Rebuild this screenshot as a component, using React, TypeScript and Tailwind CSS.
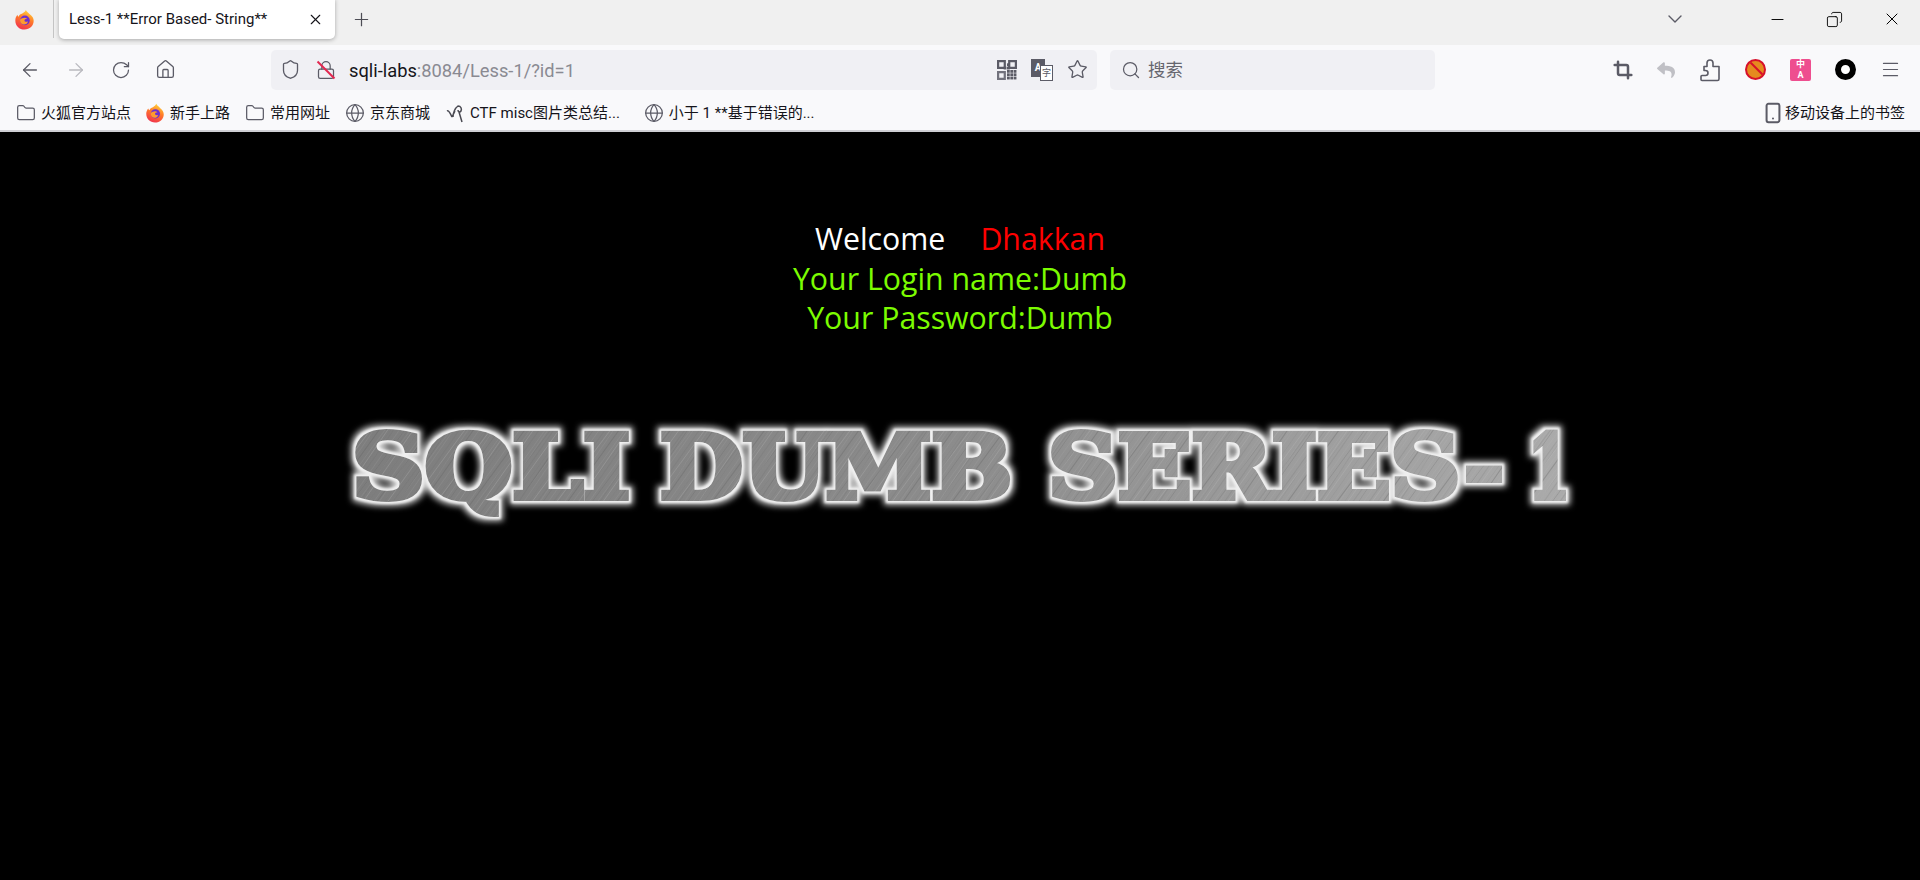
import { ArrowLeft, ArrowRight, RotateCw, House, Shield, Lock, Star, Search, Menu, Crop, Folder, Globe, Smartphone, ChevronDown, Minus, X, Copy, Plus } from "lucide-react";
import { FaReply } from "react-icons/fa";

const ui = "font-['Roboto','Noto_Sans_CJK_SC',sans-serif]";

function Fox({ size = 20 }: { size?: number }) {
  return (
    <svg width={size} height={size} viewBox="0 0 24 24" className="shrink-0">
      <defs>
        <linearGradient id="foxg" x1="0.7" y1="0" x2="0.3" y2="1">
          <stop offset="0" stopColor="#ffd83a" />
          <stop offset="0.45" stopColor="#ff7a2a" />
          <stop offset="1" stopColor="#f0304f" />
        </linearGradient>
      </defs>
      <path d="M13.5 1c1 2.5 3 3 4.500 5 3 2 4.500 5 4.500 7.500C22.500 19 18 23.500 12 23.500S1.500 19 1.500 13c0-2.500 1-5 2.500-6.500 0 1 .5 1.800 1.200 2.300C6 6.500 7.500 5.500 9.500 5c1.500-1 3.500-2 4-4z" fill="url(#foxg)" />
      <circle cx="12.500" cy="13" r="5.500" fill="#6a2fd0" />
      <path d="M7 12c2-2 6-3 8-1-2 0-3 1-3 2 0 2 3 2 4 1-.5 3-3.500 4.500-6 3.500C7.500 16.500 6.500 14 7 12z" fill="#ff9a2e" />
    </svg>
  );
}

function Bookmark({ icon, label }: { icon: React.ReactNode; label: string }) {
  return (
    <div className="flex items-center gap-[5px] text-[15px] text-[#15141a] whitespace-nowrap">
      {icon}
      <span>{label}</span>
    </div>
  );
}

const FolderIcon = <Folder size={20} strokeWidth={1.5} className="text-[#5b5b66]" />;
const GlobeIcon = <Globe size={20} strokeWidth={1.5} className="text-[#5b5b66]" />;

function QrIcon() {
  const cells = [
    [9, 9], [12, 12], [15, 15], [9, 12], [9, 15], [12, 15], [6, 6], [15, 12], [15, 9], [12, 9], [9, 3], [9, 6],
  ];
  return (
    <svg width="20" height="20" viewBox="0 0 18 18" fill="#5b5b66">
      <path d="M0 0h8v8H0zM2 2v4h4V2zM10 0h8v8h-8zM12 2v4h4V2z" fillRule="evenodd" />
      <path d="M0 10h8v8H0zM2 12v4h4v-4z" fillRule="evenodd" opacity="0.85" />
      {cells.map(([x, y]) => (
        <rect key={`${x}-${y}`} x={x} y={y} width="2.500" height="2.500" />
      ))}
    </svg>
  );
}

function PuzzleIcon() {
  return (
    <svg width="22" height="24" viewBox="0 0 22 24" fill="none" stroke="#5b5b66" strokeWidth="1.600" strokeLinejoin="round">
      <path d="M3 22.500h15.500a1.500 1.500 0 0 0 1.500-1.500V8.500h-6V5a3 3 0 1 0-6 0v3.500H5v4h1.500a2.500 2.500 0 0 1 0 5H3a1 1 0 0 0-1 1v3a1 1 0 0 0 1 1z" />
    </svg>
  );
}

function Title() {
  const lines = Array.from({ length: 340 }, (_, i) => i);
  return (
    <svg width="1240" height="124" viewBox="0 0 1240 124" className="block ml-[340px]">
      <defs>
        <linearGradient id="steel" x1="0" y1="0" x2="1" y2="0">
          <stop offset="0" stopColor="#7d7d7d" />
          <stop offset="0.5" stopColor="#8c8c8c" />
          <stop offset="1" stopColor="#ababab" />
        </linearGradient>
        <pattern id="brush" patternUnits="userSpaceOnUse" width="1240" height="124">
          <rect width="1240" height="124" fill="url(#steel)" />
          {lines.map((i) => (
            <line key={i} x1={i * 4 - 85 + (i % 3)} y1={124} x2={i * 4 + (i % 5) * 2} y2={0} stroke={i % 2 ? "#c4c4c4" : "#606060"} strokeOpacity={i % 3 === 0 ? 0.32 : 0.15} strokeWidth={i % 4 === 0 ? 1.2 : 0.7} />
          ))}
        </pattern>
        <filter id="glow" x="-3%" y="-25%" width="106%" height="150%">
          <feMorphology in="SourceAlpha" operator="dilate" radius="3.500" result="d3" />
          <feGaussianBlur in="d3" stdDeviation="3.200" result="b" />
          <feFlood floodColor="#ffffff" floodOpacity="0.85" />
          <feComposite in2="b" operator="in" result="halo" />
          <feMorphology in="SourceAlpha" operator="dilate" radius="1.500" result="d2" />
          <feGaussianBlur in="d2" stdDeviation="0.900" result="d2b" />
          <feFlood floodColor="#f0f0f0" />
          <feComposite in2="d2b" operator="in" result="edge" />
          <feMerge>
            <feMergeNode in="halo" />
            <feMergeNode in="edge" />
            <feMergeNode in="SourceGraphic" />
          </feMerge>
        </filter>
      </defs>
      <g filter="url(#glow)" fill="url(#brush)" fontFamily="'DejaVu Serif', serif" fontWeight="700" fontSize="88" stroke="url(#brush)" strokeWidth="6">
        <text x="12" y="86" textLength="278" lengthAdjust="spacingAndGlyphs">SQLI</text>
        <text x="320" y="86" textLength="352" lengthAdjust="spacingAndGlyphs">DUMB</text>
        <text x="708" y="86" textLength="456" lengthAdjust="spacingAndGlyphs">SERIES-</text>
        <text x="1188" y="86" textLength="42" lengthAdjust="spacingAndGlyphs">1</text>
      </g>
    </svg>
  );
}

export default function App() {
  return (
    <div className={`w-[1920px] h-[880px] flex flex-col overflow-hidden bg-black ${ui}`}>
      {/* tab strip */}
      <div className="h-[45px] bg-[#f0f0f0] flex items-start shrink-0">
        <div className="w-[54px] h-[38px] flex items-center pl-[14px] border-r border-[#c4c4c4]">
          <Fox size={21} />
        </div>
        <div className="ml-[5px] w-[276px] h-[40px] -mt-px bg-white rounded-b-[5px] shadow-[0_1px_4px_rgba(0,0,0,0.3)] flex items-center pl-[10px] pr-[11px] justify-between text-[15px] text-[#15141a]">
          <span className="whitespace-nowrap">Less-1 **Error Based- String**</span>
          <X size={17} strokeWidth={1.6} className="text-[#15141a]" />
        </div>
        <div className="ml-[16px] h-[38px] flex items-center">
          <Plus size={21} strokeWidth={1.4} className="text-[#4d4d55]" />
        </div>
        <div className="ml-auto h-[38px] flex items-center">
          <ChevronDown size={24} strokeWidth={1.4} className="text-[#5b5b66]" />
          <div className="w-[152px] ml-[81px] flex items-center justify-between pr-[18px]">
            <Minus size={19} strokeWidth={1.2} className="text-black" />
            <Copy size={17} strokeWidth={1.3} className="text-black -scale-x-100" />
            <X size={20} strokeWidth={1.2} className="text-black" />
          </div>
        </div>
      </div>
      {/* nav bar */}
      <div className="h-[49px] bg-[#f9f9fb] flex items-center shrink-0 text-[#5b5b66]">
        <div className="flex items-center gap-[24px] pl-[19px] w-[271px]">
          <ArrowLeft size={22} strokeWidth={1.4} />
          <ArrowRight size={22} strokeWidth={1.4} className="text-[#b9b9bf]" />
          <RotateCw size={20} strokeWidth={1.5} />
          <House size={21} strokeWidth={1.5} />
        </div>
        <div className="w-[826px] h-[40px] rounded-[5px] bg-[#f0f0f4] flex items-center pl-[9px] pr-[9px]">
          <Shield size={21} strokeWidth={1.5} />
          <div className="relative ml-[15px]">
            <Lock size={20} strokeWidth={1.5} />
            <div className="absolute left-[-2px] top-[9px] w-[24px] h-[2px] bg-[#e22850] rotate-45" />
          </div>
          <div className="ml-[13px] pt-[2px] text-[18.300px]">
            <span className="text-[#15141a]">sqli-labs</span>
            <span className="text-[#8a8a92]">:8084/Less-1/?id=1</span>
          </div>
          <div className="ml-auto flex items-center gap-[14px]">
            <QrIcon />
            <div className="w-[22px] h-[22px] relative">
              <div className="absolute left-0 top-0 w-[14px] h-[18px] bg-[#5b5b66] text-white text-[10px] font-bold leading-[18px] text-center">A</div>
              <div className="absolute right-0 bottom-0 w-[13px] h-[16px] border border-[#5b5b66] bg-white text-[9px] leading-[14px] text-center">字</div>
            </div>
            <Star size={21} strokeWidth={1.5} />
          </div>
        </div>
        <div className="ml-[13px] w-[325px] h-[40px] rounded-[5px] bg-[#f0f0f4] flex items-center pl-[11px] gap-[7px]">
          <Search size={20} strokeWidth={1.5} />
          <span className="pt-[2px] text-[17.500px] text-[#66666e]">搜索</span>
        </div>
        <div className="ml-auto flex items-center gap-[24px] pr-[19px]">
          <Crop size={20} strokeWidth={3} />
          <FaReply size={18} className="text-[#c0c0c5]" />
          <PuzzleIcon />
          <div className="relative w-[21px] h-[21px] rounded-full border-2 border-[#d7102a] bg-[#e58a1f] overflow-hidden">
            <div className="absolute left-[-3px] top-[7px] w-[26px] h-[2px] bg-[#d7102a] rotate-45" />
          </div>
          <div className="w-[21px] h-[22px] rounded-[2px] bg-[#ee4e8f] text-white text-[9px] leading-[10px] font-bold flex flex-wrap items-center justify-center text-center">
            <span className="w-full">中</span>
            <span className="w-full">A</span>
          </div>
          <div className="w-[21px] h-[21px] rounded-full border-[6px] border-black bg-white" />
          <Menu size={21} strokeWidth={1.4} />
        </div>
      </div>
      {/* bookmarks */}
      <div className="h-[38px] bg-[#f9f9fb] border-b-2 border-[#cfcfd4] flex items-center shrink-0 pl-[16px] pr-[15px] pt-[2px]">
        <Bookmark icon={FolderIcon} label="火狐官方站点" />
        <div className="ml-[14px]"><Bookmark icon={<Fox size={20} />} label="新手上路" /></div>
        <div className="ml-[15px]"><Bookmark icon={FolderIcon} label="常用网址" /></div>
        <div className="ml-[15px]"><Bookmark icon={GlobeIcon} label="京东商城" /></div>
        <div className="ml-[15px]">
          <Bookmark
            icon={
              <svg width="20" height="20" viewBox="0 0 20 20" fill="none" stroke="#4a4a52" strokeWidth="1.500">
                <path d="M2 8c2-1 4 4 5 6M8 14c0-4 2-9 5-11 3 0 4 3 3 5-1 1.500-3 1-3-1M14 9l3 10M7 14l3-6" />
              </svg>
            }
            label="CTF misc图片类总结..."
          />
        </div>
        <div className="ml-[24px]"><Bookmark icon={GlobeIcon} label="小于 1 **基于错误的..." /></div>
        <div className="ml-auto flex items-center gap-px text-[15px] text-[#15141a] whitespace-nowrap">
          <Smartphone size={22} strokeWidth={2.2} className="text-[#5b5b66]" />
          <span>移动设备上的书签</span>
        </div>
      </div>
      {/* page */}
      <div className="flex-1 bg-black pt-[87px]">
        <div className="text-center text-[30.300px] leading-[39.700px] font-['Open_Sans','Noto_Sans',sans-serif] text-[#7cfc00]">
          <div className="text-white">
            Welcome<span className="inline-block w-[35px]" /><span className="text-[#ff0000]">Dhakkan</span>
          </div>
          <div>Your Login name:Dumb</div>
          <div>Your Password:Dumb</div>
        </div>
        <div className="mt-[74px]">
          <Title />
        </div>
      </div>
    </div>
  );
}
